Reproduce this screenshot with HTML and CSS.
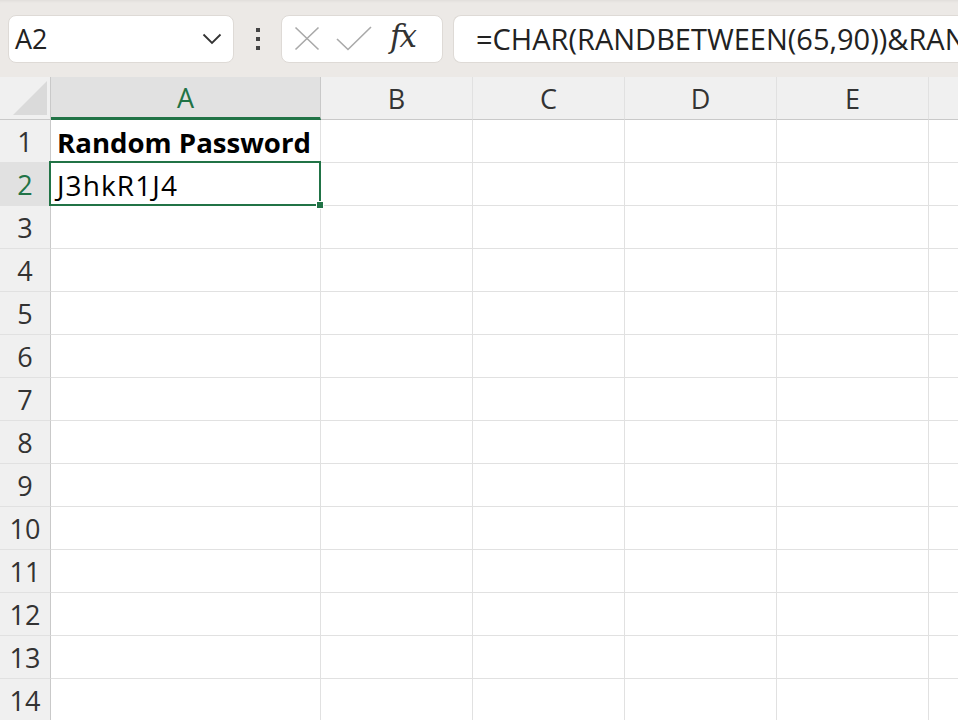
FILE: index.html
```html
<!DOCTYPE html>
<html lang="en">
<head>
<meta charset="utf-8"/>
<title>Book1 - Random Password</title>
<link rel="stylesheet" href="styles.css">
</head>
<body>
<div class="toolbar">
  <div class="namebox">
    <span class="namebox-ref">A2</span>
    <svg class="chevron" width="20" height="12" viewBox="0 0 20 12"><path d="M1.5 1.5 L10 10 L18.5 1.5" fill="none" stroke="#333" stroke-width="1.8"/></svg>
  </div>
  <div class="dots"><span></span><span></span><span></span></div>
  <div class="fxbox">
    <svg width="26" height="25" viewBox="0 0 26 25"><path d="M1.5 1.5 L24.5 23.5 M24.5 1.5 L1.5 23.5" stroke="#a9a9a9" stroke-width="1.6" fill="none"/></svg>
    <svg width="36" height="25" viewBox="0 0 36 25"><path d="M1 13 L12 23.5 L35 1" stroke="#a9a9a9" stroke-width="1.6" fill="none"/></svg>
    <span class="fx">fx</span>
  </div>
  <div class="formula">=CHAR(RANDBETWEEN(65,90))&amp;RANDBETWEEN(0,9)&amp;CHAR(RANDBETWEEN(97,122))</div>
</div>

<div class="sheet" id="sheet"></div>

<script>
  // build the visible grid: corner, column headers, then 14 rows
  const cols = ["A", "B", "C", "D", "E", ""];
  const data = { "A1": "Random Password", "A2": "J3hkR1J4" };
  const sheet = document.getElementById("sheet");
  let html = '<div class="corner"><svg width="36" height="36" viewBox="0 0 36 36"><path d="M35 1 L35 35 L1 35 Z" fill="#dadada"/></svg></div>';
  cols.forEach(c => {
    html += `<div class="col-head${c === "A" ? " active" : ""}">${c}</div>`;
  });
  for (let r = 1; r <= 14; r++) {
    html += `<div class="row-head${r === 2 ? " active" : ""}">${r}</div>`;
    cols.forEach(c => {
      const ref = c + r;
      const cls = ["cell"];
      if (r === 1) cls.push("bold");
      if (ref === "A2") cls.push("selected");
      html += `<div class="${cls.join(" ")}">${data[ref] || ""}</div>`;
    });
  }
  sheet.innerHTML = html;
</script>
</body>
</html>
```

FILE: styles.css
```css
:root {
  --toolbar: #ece9e6;
  --head: #f0f0f0;
  --head-active: #e1e1e1;
  --grid: #e1e1e1;
  --head-line: #c9c9c9;
  --green: #217346;
  --ui-font: "Open Sans", "Noto Sans", sans-serif;
}
body {
  margin: 0;
  padding: 0;
  background: #fff;
  overflow: hidden;
  font-family: var(--ui-font);
  color: #222;
}
.toolbar {
  height: 77px;
  box-sizing: border-box;
  background: var(--toolbar);
  display: flex;
  align-items: center;
  padding: 0 0 0 8px;
  white-space: nowrap;
  box-shadow: inset 0 3px 3px -2px rgba(0,0,0,0.06);
}
.namebox, .fxbox, .formula {
  height: 48px;
  box-sizing: border-box;
  background: #fff;
  border: 1px solid #dedad6;
  border-radius: 8px;
  display: flex;
  align-items: center;
}
.namebox {
  width: 226px;
  padding: 0 11px 0 6px;
  justify-content: space-between;
}
.namebox-ref {
  font-size: 27px;
  color: #222;
}
.dots {
  width: 47px;
  display: flex;
  flex-direction: column;
  align-items: center;
  gap: 5px;
}
.dots span {
  width: 4px;
  height: 4px;
  background: #444;
}
.fxbox {
  width: 162px;
  padding: 0 8px 0 12px;
  gap: 16px;
}
.fx {
  font-family: "DejaVu Serif", "Liberation Serif", serif;
  font-style: italic;
  font-size: 31px;
  color: #333;
  margin-left: 2px;
  letter-spacing: -2px;
  line-height: 1;
  padding-bottom: 4px;
}
.formula {
  margin-left: 10px;
  flex: 1;
  min-width: 0;
  overflow: hidden;
  padding-left: 22px;
  border-right: none;
  border-top-right-radius: 0;
  border-bottom-right-radius: 0;
  font-size: 29px;
  color: #222;
}
.sheet {
  display: grid;
  grid-template-columns: 51px 270px 152px 152px 152px 152px 40px;
  grid-template-rows: 43px repeat(14, 43px);
}
.corner {
  background: var(--head);
  border-right: 1px solid var(--head-line);
  border-bottom: 1px solid var(--head-line);
  display: flex;
  align-items: flex-end;
  justify-content: flex-end;
  padding: 0 2px 3px 0;
}
.col-head {
  background: var(--head);
  border-right: 1px solid var(--grid);
  border-bottom: 1px solid var(--head-line);
  display: flex;
  align-items: center;
  justify-content: center;
  font-size: 27px;
  color: #333;
}
.col-head.active {
  background: var(--head-active);
  color: var(--green);
  border-bottom: 3px solid var(--green);
  border-right-color: var(--head-line);
}
.row-head {
  background: var(--head);
  border-right: 1px solid var(--head-line);
  border-bottom: 1px solid var(--grid);
  display: flex;
  align-items: center;
  justify-content: center;
  font-size: 27px;
  color: #333;
}
.row-head.active {
  background: var(--head-active);
  color: var(--green);
}
.cell {
  border-right: 1px solid var(--grid);
  border-bottom: 1px solid var(--grid);
  display: flex;
  align-items: center;
  padding: 1px 6px 0;
  font-size: 28px;
  letter-spacing: 1.1px;
  color: #000;
  position: relative;
  white-space: nowrap;
}
.cell.bold {
  font-weight: 700;
  font-size: 27.6px;
  letter-spacing: 0;
}
.cell.selected::after {
  content: "";
  position: absolute;
  left: -2px;
  top: -2px;
  right: -1px;
  bottom: -1px;
  border: 2px solid var(--green);
}
.cell.selected::before {
  content: "";
  position: absolute;
  right: -4px;
  bottom: -4px;
  width: 6px;
  height: 6px;
  background: var(--green);
  border: 1px solid #fff;
  z-index: 2;
}
```
